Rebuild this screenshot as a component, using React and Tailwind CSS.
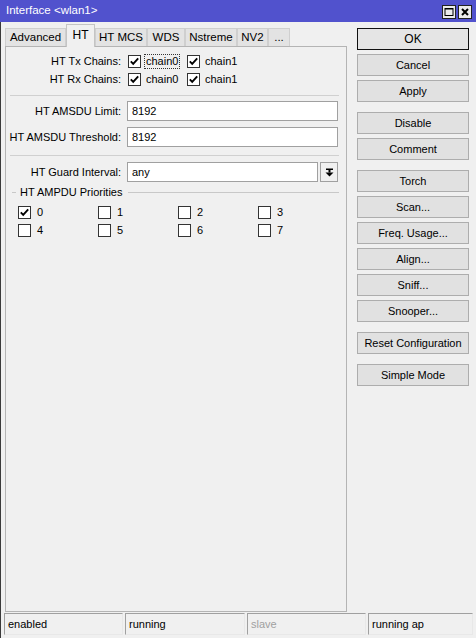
import React from "react"

const tabs = [
  { name: "Advanced", w: "w-[61px]" },
  { name: "HT", w: "w-[29px]", active: true },
  { name: "HT MCS", w: "w-[52px]" },
  { name: "WDS", w: "w-[38px]" },
  { name: "Nstreme", w: "w-[52px]" },
  { name: "NV2", w: "w-[31px]" },
  { name: "...", w: "w-[22px]" },
]

const buttonGroups = [
  ["OK", "Cancel", "Apply"],
  ["Disable", "Comment"],
  ["Torch", "Scan...", "Freq. Usage...", "Align...", "Sniff...", "Snooper..."],
  ["Reset Configuration"],
  ["Simple Mode"],
]

const status = [
  { text: "enabled", w: "w-[119px]" },
  { text: "running", w: "w-[120px]" },
  { text: "slave", w: "w-[119px]", dim: true },
  { text: "running ap", w: "w-[105px]" },
]

const Check = ({ checked }) => (
  <span className="w-[13px] h-[13px] shrink-0 border border-[#333] bg-white flex items-center justify-center">
    {checked && (
      <svg width="11" height="11" viewBox="0 0 11 11">
        <path d="M1.8 5.4 L4.2 7.9 L9.2 2.4" fill="none" stroke="#000" strokeWidth="1.9" />
      </svg>
    )}
  </span>
)

const Label = ({ children }) => (
  <span className="w-[116px] shrink-0 text-right pr-[1px]">{children}</span>
)

const Input = ({ value, w = "w-[211px]" }) => (
  <div className={`${w} h-[20px] bg-white border border-[#a0a0a0] flex items-center pl-[4px]`}>
    {value}
  </div>
)

const Separator = ({ className }) => (
  <div className={`ml-[4px] mr-[7px] border-t border-[#d0d0d0] ${className}`} />
)

export default function App() {
  return (
    <div className="w-[476px] h-[638px] bg-[#f0f0f0] flex flex-col text-[11px] text-black font-['Liberation_Sans',Arial,sans-serif] overflow-hidden">
      {/* title bar */}
      <div className="h-[22px] shrink-0 bg-[#5152cd] flex items-center pl-[6px] pr-[4px] text-white text-[11.5px]">
        <span className="flex-1">Interface &lt;wlan1&gt;</span>
        <div className="flex gap-[2px] mt-[1px]">
          <span className="w-[14px] h-[14px] bg-[#ececec] border border-[#222] flex items-center justify-center">
            <svg width="10" height="10" viewBox="0 0 10 10">
              <rect x="1" y="1.5" width="8" height="7" fill="none" stroke="#000" strokeWidth="1" />
              <rect x="1" y="1" width="8" height="1.5" fill="#000" />
            </svg>
          </span>
          <span className="w-[14px] h-[14px] bg-[#ececec] border border-[#222] flex items-center justify-center">
            <svg width="10" height="10" viewBox="0 0 10 10">
              <path d="M2 2 L8 8 M8 2 L2 8" stroke="#000" strokeWidth="2" />
            </svg>
          </span>
        </div>
      </div>

      <div className="flex-1 flex flex-col border-l border-[#3a3a3a]">
        <div className="h-[590px] flex">
          {/* left: tabs + panel */}
          <div className="ml-[4px] w-[342px] flex flex-col">
            <div className="h-[24px] flex items-end pt-[2px]">
              {tabs.map((t) =>
                t.active ? (
                  <div
                    key={t.name}
                    className={`${t.w} h-[23px] -mb-px relative z-10 bg-[#f0f0f0] border border-b-0 border-[#c4c4c4] flex items-center justify-center pb-[3px] text-[12px]`}
                  >
                    {t.name}
                  </div>
                ) : (
                  <div
                    key={t.name}
                    className={`${t.w} h-[18px] bg-[#e3e3e3] border border-b-0 border-[#cfcfcf] flex items-center justify-center text-[11.5px]`}
                  >
                    {t.name}
                  </div>
                )
              )}
            </div>
            <div className="flex-1 border border-[#b4b4b4] flex flex-col pt-[5px]">
              {/* chains */}
              {["HT Tx Chains:", "HT Rx Chains:"].map((label, i) => (
                <div key={label} className="h-[18px] flex items-center">
                  <Label>{label}</Label>
                  <div className="ml-[6px] w-[59px] flex items-center">
                    <Check checked />
                    <span
                      className={`ml-[3px] px-[1px] leading-[13px] ${
                        i === 0 ? "border border-dotted border-[#333]" : "border border-transparent"
                      }`}
                    >
                      chain0
                    </span>
                  </div>
                  <div className="flex items-center">
                    <Check checked />
                    <span className="ml-[5px]">chain1</span>
                  </div>
                </div>
              ))}

              <Separator className="mt-[7px]" />

              <div className="mt-[5px] flex items-center">
                <Label>HT AMSDU Limit:</Label>
                <div className="ml-[5px]">
                  <Input value="8192" />
                </div>
              </div>
              <div className="mt-[6px] flex items-center">
                <Label>HT AMSDU Threshold:</Label>
                <div className="ml-[5px]">
                  <Input value="8192" />
                </div>
              </div>

              <Separator className="mt-[8px]" />

              <div className="mt-[6px] flex items-center">
                <Label>HT Guard Interval:</Label>
                <div className="ml-[5px] flex gap-[2px]">
                  <Input value="any" w="w-[191px]" />
                  <div className="w-[18px] h-[20px] bg-[#f0f0f0] border border-[#a0a0a0] flex items-center justify-center">
                    <svg width="9" height="9" viewBox="0 0 9 9">
                      <rect x="1" y="0.5" width="7" height="1.5" fill="#000" />
                      <rect x="3.5" y="2" width="2" height="2.5" fill="#000" />
                      <path d="M0.5 4.5 H8.5 L4.5 8.5 Z" fill="#000" />
                    </svg>
                  </div>
                </div>
              </div>

              {/* group header */}
              <div className="mt-[3px] h-[14px] flex items-center pr-[7px]">
                <span className="ml-[6px] w-[4px] border-t border-[#c8c8c8]" />
                <span className="ml-[4px] mr-[6px]">HT AMPDU Priorities</span>
                <span className="flex-1 border-t border-[#c8c8c8]" />
              </div>

              <div className="mt-[4px] pl-[12px] grid grid-cols-[80px_80px_80px_80px]">
                {[0, 1, 2, 3, 4, 5, 6, 7].map((n) => (
                  <div key={n} className="h-[18px] flex items-center">
                    <Check checked={n === 0} />
                    <span className="ml-[6px]">{n}</span>
                  </div>
                ))}
              </div>
            </div>
          </div>

          {/* right: buttons */}
          <div className="ml-[10px] w-[112px] pt-[6px] flex flex-col gap-[10px]">
            {buttonGroups.map((group, gi) => (
              <div key={gi} className="flex flex-col gap-[4px]">
                {group.map((b) => (
                  <div
                    key={b}
                    className={`h-[22px] flex items-center justify-center bg-[#e1e1e1] border ${
                      b === "OK" ? "border-[#111] bg-[#e5e5e5] text-[12px]" : "border-[#adadad]"
                    }`}
                  >
                    {b}
                  </div>
                ))}
              </div>
            ))}
          </div>
        </div>

        {/* status bar */}
        <div className="mt-[1px] h-[22px] flex gap-[2px] pl-[3px]">
          {status.map((s) => (
            <div
              key={s.text}
              className={`${s.w} h-full flex items-center pl-[3px] border border-t-[#a0a0a0] border-l-[#a0a0a0] border-r-[#e8e8e8] border-b-[#e8e8e8] ${
                s.dim ? "text-[#a0a0a0]" : ""
              }`}
            >
              {s.text}
            </div>
          ))}
        </div>
      </div>
    </div>
  )
}
